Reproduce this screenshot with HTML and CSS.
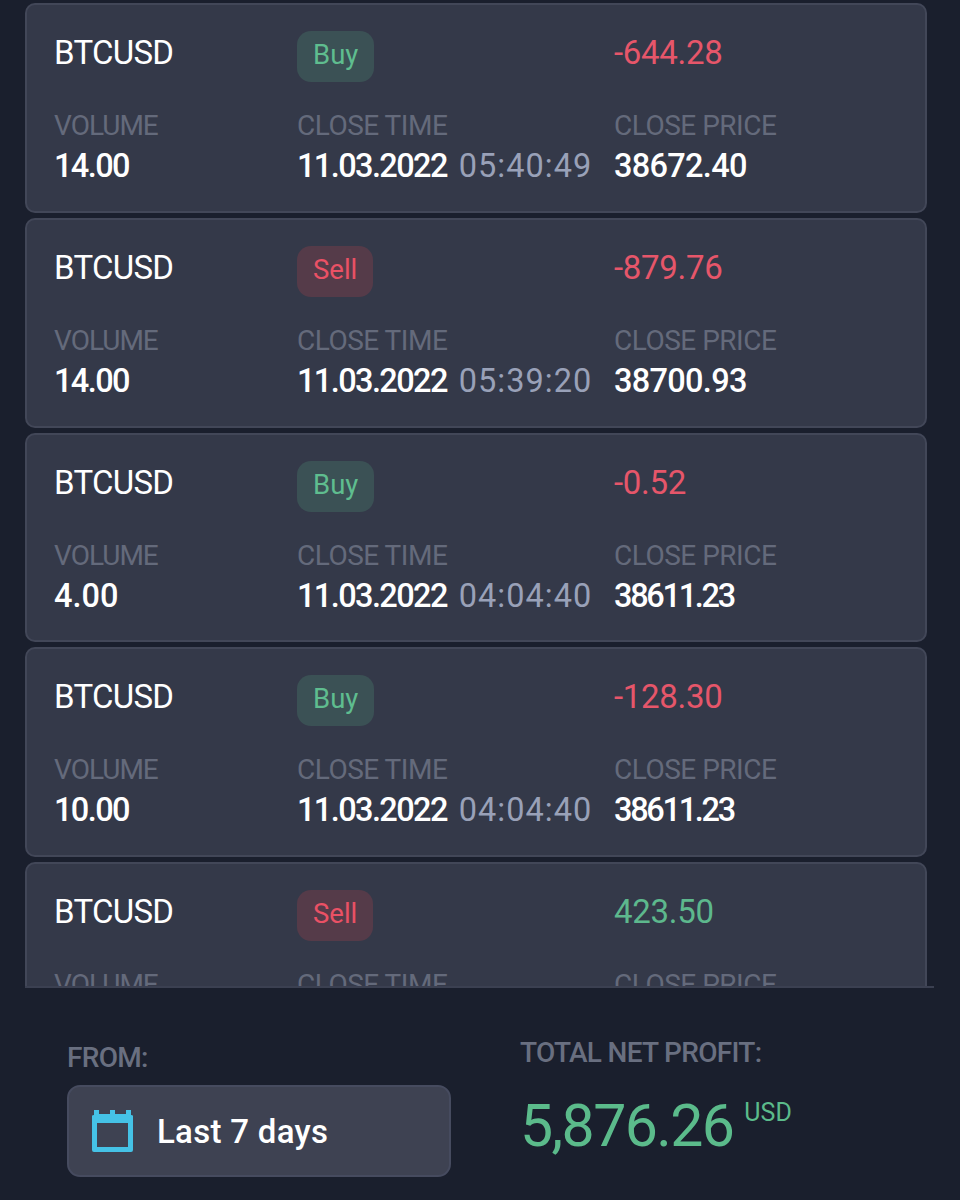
FILE: index.html
```
<!DOCTYPE html>
<html lang="en">
<head>
    <meta charset="UTF-8">
    <meta name="viewport" content="width=device-width, initial-scale=1.0">
    <title>Trade History</title>
    <link rel="stylesheet" href="styles.css">
</head>
<body>

    <main class="trades">
        <div class="trade">
            <div class="symbol">BTCUSD</div>
            <div><span class="badge buy">Buy</span></div>
            <div class="profit loss">-644.28</div>
            <div class="label label-volume">Volume</div>
            <div class="label">Close time</div>
            <div class="label">Close price</div>
            <div class="value volume">14.00</div>
            <div class="value when"><span class="date">11.03.2022</span><span class="time">05:40:49</span></div>
            <div class="value price">38672.40</div>
        </div>

        <div class="trade">
            <div class="symbol">BTCUSD</div>
            <div><span class="badge sell">Sell</span></div>
            <div class="profit loss">-879.76</div>
            <div class="label label-volume">Volume</div>
            <div class="label">Close time</div>
            <div class="label">Close price</div>
            <div class="value volume">14.00</div>
            <div class="value when"><span class="date">11.03.2022</span><span class="time">05:39:20</span></div>
            <div class="value price">38700.93</div>
        </div>

        <div class="trade">
            <div class="symbol">BTCUSD</div>
            <div><span class="badge buy">Buy</span></div>
            <div class="profit loss">-0.52</div>
            <div class="label label-volume">Volume</div>
            <div class="label">Close time</div>
            <div class="label">Close price</div>
            <div class="value">4.00</div>
            <div class="value when"><span class="date">11.03.2022</span><span class="time">04:04:40</span></div>
            <div class="value price narrow">38611.23</div>
        </div>

        <div class="trade">
            <div class="symbol">BTCUSD</div>
            <div><span class="badge buy">Buy</span></div>
            <div class="profit loss">-128.30</div>
            <div class="label label-volume">Volume</div>
            <div class="label">Close time</div>
            <div class="label">Close price</div>
            <div class="value volume">10.00</div>
            <div class="value when"><span class="date">11.03.2022</span><span class="time">04:04:40</span></div>
            <div class="value price narrow">38611.23</div>
        </div>

        <div class="trade">
            <div class="symbol">BTCUSD</div>
            <div><span class="badge sell">Sell</span></div>
            <div class="profit gain">423.50</div>
            <div class="label label-volume">Volume</div>
            <div class="label">Close time</div>
            <div class="label">Close price</div>
        </div>
    </main>

    <footer>
        <div class="period">
            <div class="footer-label">From:</div>
            <button class="period-select">
                <svg class="calendar" viewBox="0 0 42 42">
                    <path fill="#45c2e6" fill-rule="evenodd" d="M0 6q0-1 2-1V0h5v4h11V0h5v4h11V0h5v5q2 0 2 1v34q0 2-2 2H2q-2 0-2-2zM5 13v24h31V13z"/>
                </svg>
                <span>Last 7 days</span>
            </button>
        </div>
        <div class="total">
            <div class="footer-label">Total net profit:</div>
            <div class="amount">
                <span class="sum">5,876.26</span>
                <span class="currency">USD</span>
            </div>
        </div>
    </footer>

</body>
</html>
```

FILE: styles.css
```
* {
    box-sizing: border-box;
}

body {
    margin: 0;
    height: 1200px;
    overflow: hidden;
    background: #1a1f2d;
    color: #fff;
    font-family: Roboto, "Liberation Sans", sans-serif;
    font-size: 33px;
    line-height: 40px;
}

/* Trade list */
.trades {
    display: flex;
    flex-direction: column;
    gap: 5px;
    width: 909px;
    height: 988px;
    margin-left: 25px;
    padding-top: 3px;
    overflow: hidden;
    border-bottom: 2px solid #3b4051;
}

.trade {
    display: grid;
    grid-template-columns: 243px 317px 1fr;
    grid-template-rows: 77px 37px 40px;
    flex: none;
    width: 902px;
    height: 209.8px;
    padding: 26px 27px;
    background: #343949;
    border: 2px solid #424758;
    border-radius: 10px;
    white-space: nowrap;
}

.symbol, .profit {
    padding-top: 2px;
}

.symbol {
    letter-spacing: -0.7px;
}

.label {
    color: #646a7b;
    font-size: 28px;
    line-height: 36px;
    letter-spacing: -0.5px;
    text-transform: uppercase;
}

.label-volume {
    letter-spacing: -1px;
}

.badge {
    display: inline-block;
    height: 51px;
    padding: 0 16px;
    border-radius: 14px;
    font-size: 27.5px;
    line-height: 48px;
}

.buy {
    background: #3b5155;
    color: #5fbd8f;
}

.sell {
    background: #553b49;
    color: #ea5165;
}

.profit {
    letter-spacing: -0.3px;
}

.loss {
    color: #e6566a;
}

.gain {
    color: #5db88d;
}

.value {
    font-size: 32.5px;
    font-weight: 500;
    line-height: 42px;
}

.volume, .date {
    letter-spacing: -1.6px;
}

.when {
    display: flex;
    gap: 12px;
}

.time {
    color: #99a1b8;
    font-weight: 400;
    letter-spacing: 1px;
}

.price {
    letter-spacing: -0.7px;
}

.narrow {
    letter-spacing: -2.3px;
}

/* Bottom bar */
footer {
    display: grid;
    grid-template-columns: 453px 1fr;
    padding: 52px 67px 0;
}

.footer-label {
    color: #696f80;
    font-size: 28px;
    font-weight: 500;
    line-height: 36px;
    letter-spacing: -0.7px;
    text-transform: uppercase;
}

.period-select {
    display: flex;
    align-items: center;
    gap: 23px;
    width: 384px;
    height: 92px;
    margin-top: 9px;
    padding: 0 23px;
    background: #3e4252;
    border: 2px solid #464b5f;
    border-radius: 13px;
    color: #fff;
    font: 500 33px Roboto, "Liberation Sans", sans-serif;
    letter-spacing: 0.3px;
}

.calendar {
    width: 42px;
    height: 42px;
}

.total .footer-label {
    margin-top: -5px;
}

.amount {
    display: flex;
    gap: 11px;
    margin-top: 20px;
    color: #5bbb8b;
}

.sum {
    font-size: 59px;
    line-height: 70px;
    letter-spacing: -1.6px;
}

.currency {
    font-size: 25px;
    line-height: 44px;
}
```
